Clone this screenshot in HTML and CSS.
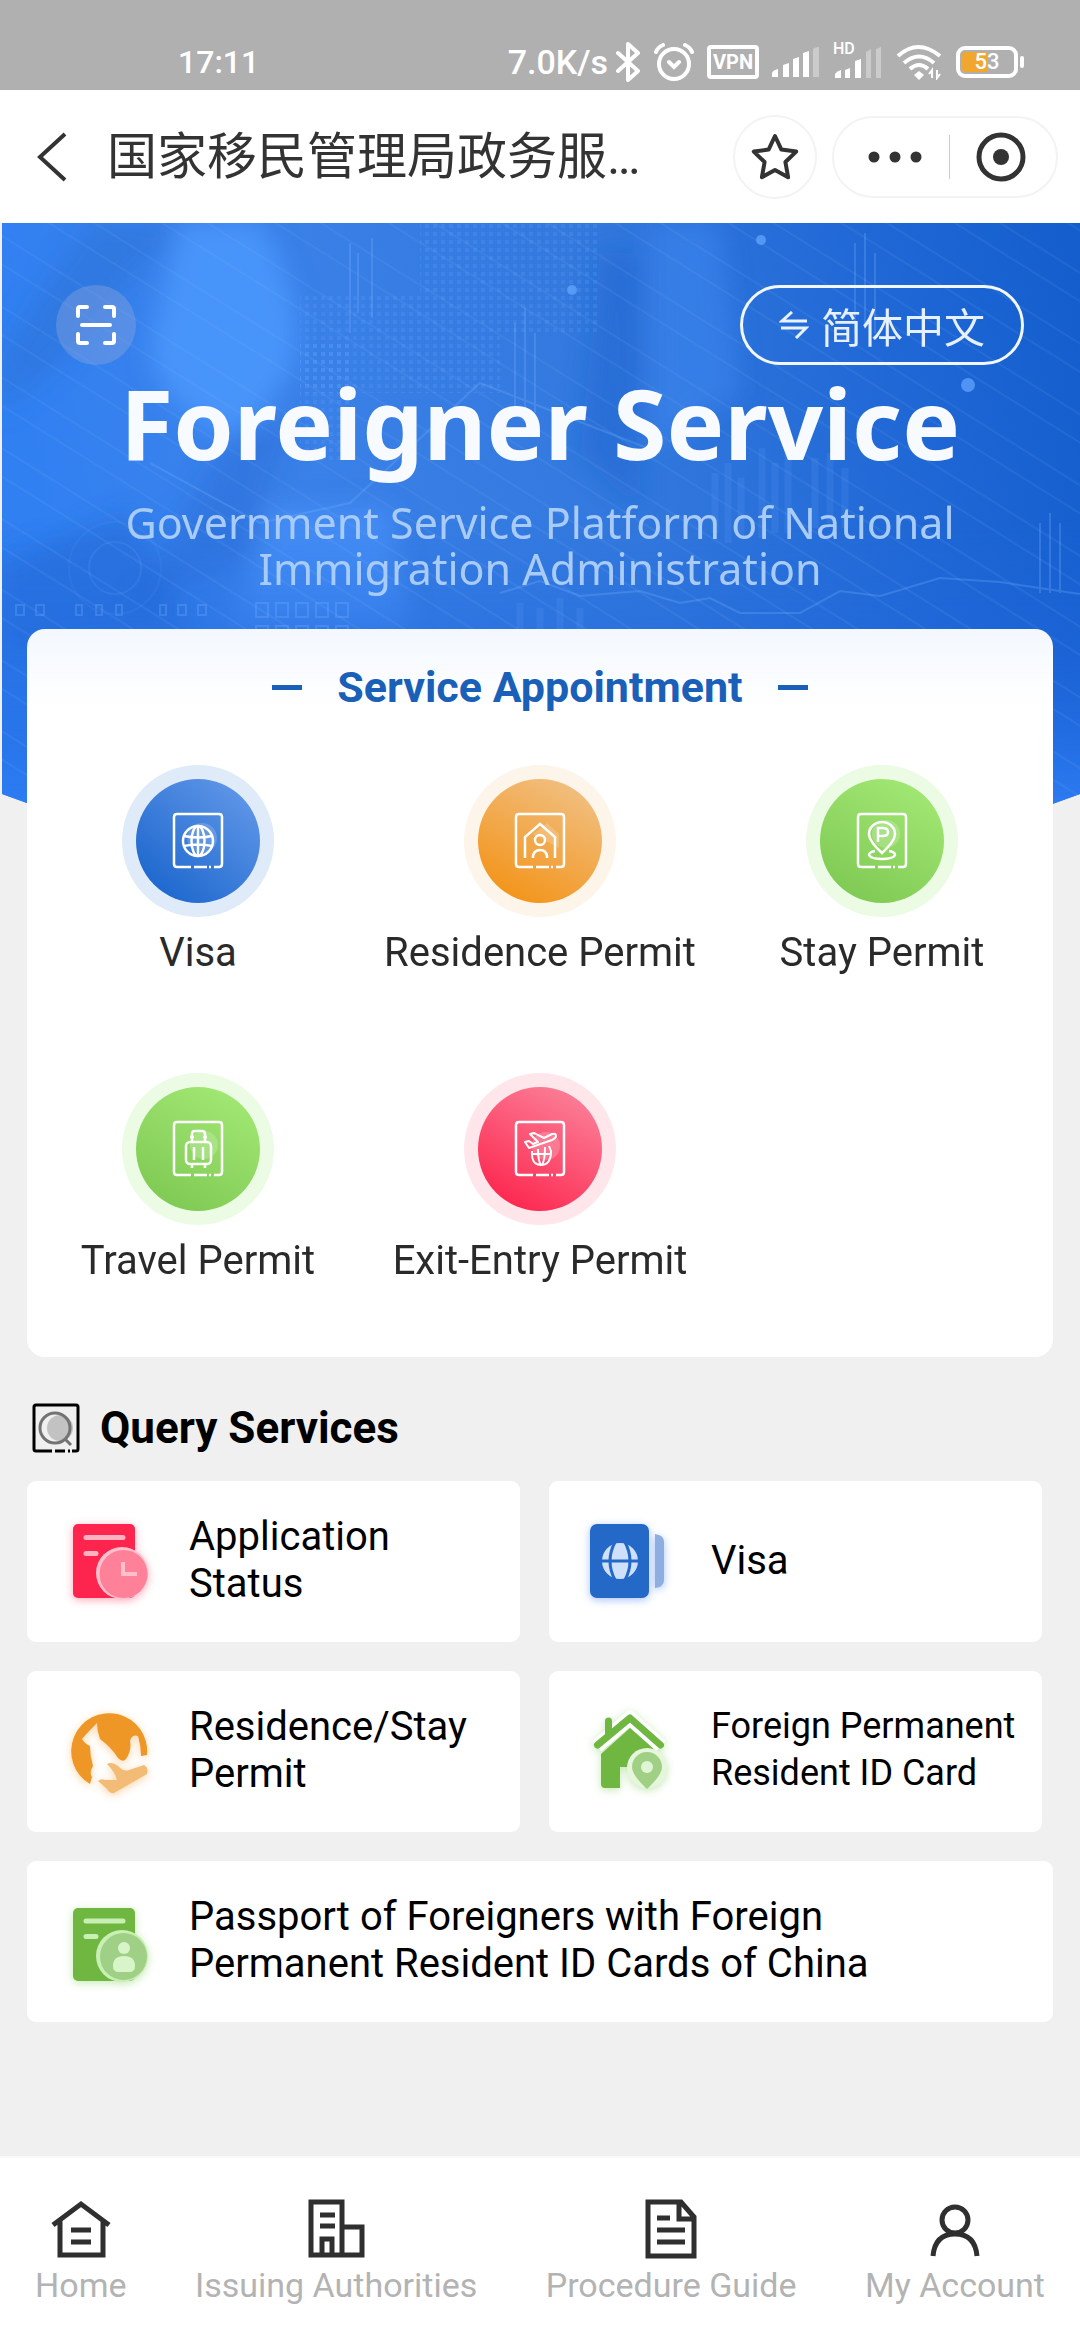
FILE: index.html
```html
<!DOCTYPE html>
<html lang="en">
<head>
<meta charset="utf-8">
<meta name="viewport" content="width=device-width, initial-scale=1">
<title>Foreigner Service</title>
<link rel="stylesheet" href="styles.css">
</head>
<body>
<svg class="defs" width="0" height="0" aria-hidden="true">
  <defs>
    <linearGradient id="blue" x1="0.2" y1="1" x2="0.9" y2="0.2"><stop offset="0" stop-color="#1b66cd"/><stop offset="1" stop-color="#5b93e6"/></linearGradient>
    <linearGradient id="orange" x1="0.3" y1="1" x2="0.8" y2="0.1"><stop offset="0" stop-color="#f3941a"/><stop offset="1" stop-color="#f1bd7c"/></linearGradient>
    <linearGradient id="green" x1="0.3" y1="1" x2="0.8" y2="0.1"><stop offset="0" stop-color="#7fca54"/><stop offset="1" stop-color="#a0e672"/></linearGradient>
    <linearGradient id="red" x1="0.3" y1="1" x2="0.8" y2="0.1"><stop offset="0" stop-color="#fd274f"/><stop offset="1" stop-color="#fb7b94"/></linearGradient>
    <path id="frame" d="M70 103H56q-3 0-3-3V53q0-3 3-3H98q3 0 3 3V100q0 3-3 3H93M73 103H86M88 103h2"/>
  </defs>
</svg>

<div class="status-bar">
  <span class="clock">17:11</span>
  <div class="status-icons">
    <span class="speed">7.0K/s</span>
    <svg width="26" height="40" viewBox="0 0 26 40" fill="none" stroke="#fff" stroke-width="4" stroke-linejoin="round" stroke-linecap="round"><path d="M3 11l20 18-10 9V2l10 9L3 29"/></svg>
    <svg width="40" height="38" viewBox="0 0 40 38" fill="none" stroke="#fff" stroke-width="4" stroke-linecap="round"><circle cx="20" cy="21" r="15"/><path d="M15 19l5 5 5-5M2 9q2-5 7-7M38 9q-2-5-7-7" stroke-width="4"/></svg>
    <span class="vpn">VPN</span>
    <svg width="48" height="32" viewBox="0 0 48 32" fill="#fff"><path d="M0 31v-4q1-3 6-4v8zM11 19l6-2v14h-6zM21 13l6-2v20h-6zM31 7l6-2v26h-6z"/><path d="M41 3q2-2 6-2v30h-6z" opacity=".35"/></svg>
    <span class="hd"><span class="hd-text">HD</span>
      <svg width="50" height="34" viewBox="0 0 50 34" fill="#fff"><path d="M2 33v-4q2-3 6-4v8zM12 25l5-2v10h-5zM22 16l6-2v19h-6z"/><path d="M33 7l5-3v29h-5zM43 4l5-2v31h-5z" opacity=".35"/></svg>
    </span>
    <svg width="47" height="36" viewBox="0 0 47 36" fill="none" stroke="#fff" stroke-width="4"><path d="M2 12q20-18 42 0M8 19q15-13 30 0M14 25q9-8 18 0"/><path d="M23 27l5 4-5 5-5-5z" fill="#fff" stroke="none"/><path d="M36 34v-8l-3 4M41 26v8l3-4" stroke-width="2"/></svg>
    <span class="battery"><span class="battery-body"><span class="battery-text">53</span></span><span class="battery-tip"></span></span>
  </div>
</div>

<header class="nav-bar">
  <button class="icon-button back" aria-label="Back"><svg width="32" height="52" viewBox="0 0 32 52" fill="none" stroke="#333" stroke-width="4"><path d="M29 3L4 26l25 23"/></svg></button>
  <div class="nav-title" lang="zh-CN">国家移民管理局政务服…</div>
  <button class="icon-button star" aria-label="Favourite"><svg width="50" height="50" viewBox="0 0 50 50" fill="none" stroke="#333" stroke-width="4" stroke-linejoin="round"><path d="M25 4l6.400 13.600 14.800 2-10.800 10.400 2.700 15.200L25 38l-13.100 7.200 2.700-15.200L3.800 19.600l14.800-2z"/></svg></button>
  <div class="capsule">
    <button class="icon-button" aria-label="More"><svg width="56" height="14" viewBox="0 0 56 14" fill="#333"><circle cx="7" cy="7" r="5.500"/><circle cx="28" cy="7" r="5.500"/><circle cx="49" cy="7" r="5.500"/></svg></button>
    <span class="divider"></span>
    <button class="icon-button" aria-label="Close"><svg width="50" height="50" viewBox="0 0 50 50"><circle cx="25" cy="25" r="22" fill="none" stroke="#333" stroke-width="5"/><circle cx="25" cy="25" r="8" fill="#333"/></svg></button>
  </div>
</header>

<main class="content">
  <svg class="backdrop" viewBox="0 0 1080 590" preserveAspectRatio="none" aria-hidden="true">
    <defs>
      <linearGradient id="sky" x1="0" y1="0.1" x2="1" y2="0"><stop offset="0" stop-color="#3180f2"/><stop offset=".2" stop-color="#3b82ea"/><stop offset=".55" stop-color="#3278dd"/><stop offset=".8" stop-color="#2068d6"/><stop offset="1" stop-color="#135dcd"/></linearGradient>
      <linearGradient id="deep" x1="0" y1="0" x2="0" y2="1"><stop offset=".5" stop-color="#1f67dc" stop-opacity="0"/><stop offset=".75" stop-color="#1f67dc" stop-opacity=".5"/><stop offset="1" stop-color="#2e7df4"/></linearGradient>
      <pattern id="dots" width="8" height="8" patternUnits="userSpaceOnUse"><rect x="1" y="1" width="4" height="4" fill="#68a7ff" opacity=".2"/></pattern>
      <pattern id="rays" width="60" height="60" patternUnits="userSpaceOnUse" patternTransform="rotate(32)"><path d="M0 10H60M0 34H60" stroke="#8fbdff" stroke-width="1.500" opacity=".13"/></pattern>
      <filter id="soft" x="-20%" y="-20%" width="140%" height="140%"><feGaussianBlur stdDeviation="12"/></filter>
      <clipPath id="arc"><path d="M2 0H1080V571Q540 771 2 571Z"/></clipPath>
    </defs>
    <g clip-path="url(#arc)">
      <rect width="1080" height="590" fill="url(#sky)"/>
      <g filter="url(#soft)">
        <path d="M180 0h80q50 80 30 150l-50 70q-90-40-90-100z" fill="#4a98fd" opacity=".85"/>
        <path d="M90 0h90L60 140 0 190v-60z" fill="#2a6fd6" opacity=".5"/>
        <path d="M300 200q-40 60-40 130l-130 60q60-120 110-190z" fill="#2569d2" opacity=".4"/>
        <path d="M270 285h120l20 120H230z" fill="#4a93fb" opacity=".7"/>
        <path d="M650 0h70l20 170-90 60z" fill="#3c86ee" opacity=".6"/>
        <path d="M600 30h40v260l-60-60z" fill="#1e62cd" opacity=".4"/>
        <path d="M0 340l130-50 60 120-190 20z" fill="#2365d2" opacity=".5"/>
      </g>
      <rect width="1080" height="590" fill="url(#deep)"/>
      <path d="M420 0h180v110H500v60H300V70h120z" fill="url(#dots)"/>
      <path d="M300 120h50v120h-50z" fill="url(#dots)"/>
      <rect width="1080" height="590" fill="url(#rays)"/>
      <g fill="none" stroke="#78b0ff" stroke-width="2" opacity=".28">
        <path d="M150 240l110 60 90-20 130-120 180 70M500 370l40-12 40 15 60-5 40 12 30-5 30 15h60l40-22 40 5 60-18 60 4 80 12"/>
        <path d="M350 20v90M358 30v60M372 15v80M515 100v90M525 85v110M535 110v80M855 20v90M865 10v90M875 30v80M1040 300v70M1050 290v80M1060 300v70"/>
        <path d="M256 380h12v14h-12zM276 380h12v14h-12zM296 380h12v14h-12zM316 380h12v14h-12zM336 380h12v14h-12zM256 403h12v14h-12zM276 403h12v14h-12zM296 403h12v14h-12zM316 403h12v14h-12zM336 403h12v14h-12z"/>
        <path d="M16 382h8v10h-8zM36 382h8v10h-8zM76 382h6v10h-6zM96 382h6v10h-6zM116 382h6v10h-6zM160 382h6v10h-6zM178 382h8v10h-8zM198 382h8v10h-8z"/>
        <circle cx="115" cy="345" r="26" opacity=".5"/><circle cx="115" cy="345" r="46" opacity=".3"/>
      </g>
      <path d="M715 250v60M728 240v80M741 255v60M762 225v90M775 240v70M788 220v90M815 235v70M830 230v70M845 245v60M520 380v30M540 385v30M560 375v40M580 385v30" stroke="#5d9cf8" stroke-width="7" opacity=".18"/>
      <g fill="#65a8ff" opacity=".7"><circle cx="761" cy="17" r="5"/><circle cx="572" cy="67" r="5"/><circle cx="968" cy="162" r="7"/></g>
    </g>
  </svg>

  <section class="hero">
    <div class="hero-actions">
      <button class="scan" aria-label="Scan"><svg width="44" height="44" viewBox="0 0 44 44" fill="none" stroke="#fff" stroke-width="4" stroke-linecap="round"><path d="M4 13V6q0-2 2-2h7M31 4h7q2 0 2 2v7M40 31v7q0 2-2 2h-7M13 40H6q-2 0-2-2v-7M8 22H36"/></svg></button>
      <button class="language" lang="zh-CN"><svg width="30" height="28" viewBox="0 0 30 28" fill="none" stroke="#e9f2ff" stroke-width="3"><path d="M28 10H3l10-9M2 17h25l-10 10"/></svg><span>简体中文</span></button>
    </div>
    <h1 class="hero-title">Foreigner Service</h1>
    <p class="hero-subtitle">Government Service Platform of National<br>Immigration Administration</p>
  </section>

  <section class="appointment">
    <h2 class="appointment-title">Service Appointment</h2>
    <div class="service-grid">
      <a class="service" href="#visa">
        <svg width="154" height="154" viewBox="0 0 154 154"><circle cx="77" cy="77" r="76" fill="#e0ebf9"/><circle cx="77" cy="77" r="62" fill="url(#blue)"/><circle cx="81" cy="74" r="15" fill="#fff" opacity=".18"/><g fill="none" stroke="#fff" stroke-width="2.500"><use href="#frame"/><circle cx="77" cy="77" r="15"/><ellipse cx="77" cy="77" rx="6.500" ry="15"/><path d="M77 62V92M63 72q14 3 28 0M63 82q14-3 28 0"/></g></svg>
        <span>Visa</span>
      </a>
      <a class="service" href="#residence">
        <svg width="154" height="154" viewBox="0 0 154 154"><circle cx="77" cy="77" r="76" fill="#fdf4ea"/><circle cx="77" cy="77" r="62" fill="url(#orange)"/><path d="M70 70l14-11 12 11v14z" fill="#fff" opacity=".18"/><g fill="none" stroke="#fff" stroke-width="2.500"><use href="#frame"/><path d="M62 94V73L77 60 92 73V94M70 94v-2q1-6 7-6t7 6v2"/><circle cx="77" cy="76" r="5"/></g></svg>
        <span>Residence Permit</span>
      </a>
      <a class="service" href="#stay">
        <svg width="154" height="154" viewBox="0 0 154 154"><circle cx="77" cy="77" r="76" fill="#ebfbe4"/><circle cx="77" cy="77" r="62" fill="url(#green)"/><circle cx="81" cy="70" r="14" fill="#fff" opacity=".2"/><g fill="none" stroke="#fff" stroke-width="2.500"><use href="#frame"/><path d="M77 89Q64 77 64 70a13 12 0 0 1 26 0Q90 77 77 89ZM73 78V64h5q5 0 5 4t-5 4h-5M70 87q-6 1-6 4 2 4 13 4t13-4q0-3-6-4"/></g></svg>
        <span>Stay Permit</span>
      </a>
      <a class="service" href="#travel">
        <svg width="154" height="154" viewBox="0 0 154 154"><circle cx="77" cy="77" r="76" fill="#ebfbe4"/><circle cx="77" cy="77" r="62" fill="url(#green)"/><circle cx="83" cy="73" r="14" fill="#fff" opacity=".2"/><g fill="none" stroke="#fff" stroke-width="2.500"><use href="#frame"/><path d="M71 70V62q0-3 3-3h7q3 0 3 3v8M69 65h4M82 65h4"/><rect x="65" y="70" width="25" height="22" rx="4"/><path d="M73 75v13M82 75v13M71 92v4M84 92v4"/></g></svg>
        <span>Travel Permit</span>
      </a>
      <a class="service" href="#exit-entry">
        <svg width="154" height="154" viewBox="0 0 154 154"><circle cx="77" cy="77" r="76" fill="#fee6ea"/><circle cx="77" cy="77" r="62" fill="url(#red)"/><circle cx="83" cy="74" r="14" fill="#fff" opacity=".2"/><g fill="none" stroke="#fff" stroke-width="2.500" stroke-linejoin="round"><use href="#frame"/><path d="M62 70l4-1 4 3 5-2-8-8 4-1 10 5 8-4q4-1 4 2 0 2-4 4L66 76zM69 79q-1 14 9 14t10-14l-2-5M69 82h19M75 77q0 12 3 16M82 75q0 13-3 18" stroke-width="2"/></g></svg>
        <span>Exit-Entry Permit</span>
      </a>
    </div>
  </section>

  <section class="queries">
    <h2 class="query-title"><svg width="48" height="50" viewBox="0 0 48 50" fill="none" stroke="#000" stroke-width="3"><path d="M20 48H4q-2 0-2-2V4q0-2 2-2H44q2 0 2 2V46q0 2-2 2H40M23 48H33M36 48h2"/><circle cx="28" cy="25" r="13" fill="#c2c2c2" stroke="none"/><g stroke="#737373" stroke-width="3"><circle cx="23" cy="25" r="15"/><path d="M33 36l6 6"/></g></svg>Query Services</h2>
    <div class="query-grid">
      <a class="query" href="#status">
        <svg class="glow-red" width="84" height="84" viewBox="0 0 84 84"><rect x="5" y="4" width="62" height="74" rx="5" fill="#fd244d"/><path d="M18 17.500H55M18 33.500H28" stroke="#ffb3c2" stroke-width="5" stroke-linecap="round"/><circle cx="54" cy="53" r="26" fill="#ffc0cc"/><circle cx="55.500" cy="54" r="24" fill="#ff8199"/><path d="M55 42V54H69" fill="none" stroke="#ffc0cc" stroke-width="4"/></svg>
        <span class="query-label">Application<br>Status</span>
      </a>
      <a class="query" href="#visa-query">
        <svg class="glow-blue" width="84" height="84" viewBox="0 0 84 84"><rect y="4" width="59" height="74" rx="7" fill="#2468c8"/><path d="M65 14q9 1 9 8V60q0 7-9 8z" fill="#8eaedf"/><circle cx="30" cy="41" r="18" fill="#cfe0fa"/><path d="M11 41H49M25 22q-10 19 0 38M35 22q10 19 0 38" fill="none" stroke="#2468c8" stroke-width="3"/></svg>
        <span class="query-label">Visa</span>
      </a>
      <a class="query" href="#residence-query">
        <svg class="glow-orange" width="84" height="84" viewBox="0 0 84 84"><path d="M22 74A38 38 0 1 1 79 45L73 46Q73 36 70 26q-6-2-8 5 2 9-4 18-3 4-8-1Q44 38 32 29q-3-8-3-16-9 9-15 16 3 5 8 7 0 10 3 20-4 6-1 11z" fill="#ee9727"/><path d="M30 71q3-3 7-1h12q-2-8-10-16 5-3 11 2 6 6 11 4L76 55q5 3 3 9L46 83q-4 1-7-4z" fill="#f3bc76"/></svg>
        <span class="query-label">Residence/Stay<br>Permit</span>
      </a>
      <a class="query" href="#id-card">
        <svg class="glow-green" width="84" height="84" viewBox="0 0 84 84"><path d="M11 44L40 18 65 39V57H30V78H15q-4 0-4-4z" fill="#70b742"/><path d="M7 36L40 8 71 36" fill="none" stroke="#fff" stroke-width="14"/><path d="M18.500 24V11" stroke="#70b742" stroke-width="7" stroke-linecap="round"/><path d="M7.500 35L40 8 70.500 35" fill="none" stroke="#70b742" stroke-width="7" stroke-linecap="round" stroke-linejoin="round"/><circle cx="57" cy="58" r="20" fill="#e6f6dc"/><path d="M57 79Q42 65 42 57a15 15 0 0 1 30 0Q72 65 57 79Z" fill="#9fd083"/><circle cx="57" cy="57" r="6" fill="#e0f5d5"/></svg>
        <span class="query-label compact">Foreign Permanent<br>Resident ID Card</span>
      </a>
    </div>
    <a class="query" href="#passport">
      <svg class="glow-green" width="84" height="84" viewBox="0 0 84 84"><rect x="5" y="8" width="62" height="73" rx="5" fill="#70b742"/><path d="M18 21H55M18 36.500H28" stroke="#c9f0b4" stroke-width="5" stroke-linecap="round"/><circle cx="54" cy="56" r="26" fill="#c9f0b4"/><circle cx="55.500" cy="56.500" r="23.500" fill="#a0cf86"/><circle cx="56" cy="48" r="6" fill="#d8f5c9"/><path d="M45 66q0-10 11-10t11 10q0 6-6 6H51q-6 0-6-6z" fill="#d8f5c9"/></svg>
      <span class="query-label">Passport of Foreigners with Foreign<br>Permanent Resident ID Cards of China</span>
    </a>
  </section>
</main>

<nav class="tab-bar">
  <a class="tab" href="#home"><svg width="64" height="64" viewBox="0 0 64 64" fill="none" stroke="#2f2f2f" stroke-width="5"><path d="M4 29L32 8l28 21M11 24V59H54V24M22 34H42M22 46H42"/></svg><span>Home</span></a>
  <a class="tab" href="#authorities"><svg width="64" height="64" viewBox="0 0 64 64" fill="none" stroke="#2f2f2f" stroke-width="5"><path d="M7 6H38V59H7zM38 31H58V59H38M16 19H31M16 30H31M18 59V43H28V59"/></svg><span>Issuing Authorities</span></a>
  <a class="tab" href="#guide"><svg width="64" height="64" viewBox="0 0 64 64" fill="none" stroke="#2f2f2f" stroke-width="5"><path d="M9 6H42L55 21V60H9zM40 6V23H55M18 22H31M18 34H46M18 46H46"/></svg><span>Procedure Guide</span></a>
  <a class="tab" href="#account"><svg width="64" height="64" viewBox="0 0 64 64" fill="none" stroke="#2f2f2f" stroke-width="5"><circle cx="32" cy="24" r="13"/><path d="M10 60Q12 38 32 38T54 60"/></svg><span>My Account</span></a>
</nav>
</body>
</html>
```
FILE: styles.css
```css
* {
  box-sizing: border-box;
}

body {
  margin: 0;
  min-height: 100vh;
  display: flex;
  flex-direction: column;
  background: #f0f0f0;
  color: #000;
  font-family: Roboto, "Noto Sans CJK SC", sans-serif;
}

svg {
  display: block;
  flex: none;
}

.defs {
  position: absolute;
}

a {
  color: inherit;
  text-decoration: none;
}

button {
  margin: 0;
  padding: 0;
  border: 0;
  background: none;
  color: inherit;
  font: inherit;
}

h1,
h2,
p {
  margin: 0;
}

/* Status bar */
.status-bar {
  height: 90px;
  padding: 42px 56px 8px 178px;
  display: flex;
  justify-content: space-between;
  align-items: center;
  background: #b0b0b0;
  color: #fff;
  font-size: 34px;
  font-weight: 500;
  line-height: 40px;
}

.clock {
  font-size: 32px;
}

.status-icons {
  display: flex;
  align-items: center;
  gap: 13px;
}

.speed {
  margin-right: -6px;
}

.vpn {
  width: 52px;
  height: 34px;
  border: 4px solid #fff;
  border-radius: 4px;
  font-size: 20px;
  font-weight: 700;
  line-height: 26px;
  text-align: center;
}

.hd {
  position: relative;
}

.hd-text {
  position: absolute;
  left: 0;
  top: -4px;
  font-size: 16px;
  line-height: 16px;
}

.battery {
  display: flex;
  align-items: center;
  gap: 2px;
}

.battery-body {
  width: 62px;
  height: 32px;
  border: 4px solid #fff;
  border-radius: 9px;
  padding: 2px;
  background: linear-gradient(90deg, #f0a62f 50%, transparent 50%) content-box;
}

.battery-text {
  display: block;
  font-size: 22px;
  line-height: 20px;
  text-align: center;
}

.battery-tip {
  width: 4px;
  height: 12px;
  border-radius: 2px;
  background: #fff;
}

/* Navigation bar */
.nav-bar {
  height: 133px;
  padding: 0 22px 0 36px;
  display: flex;
  align-items: center;
  background: #fff;
  color: #333;
}

.icon-button {
  display: flex;
  align-items: center;
  justify-content: center;
}

.nav-title {
  flex: 1;
  margin-left: 39px;
  font-size: 50px;
  line-height: 60px;
  white-space: nowrap;
}

.star {
  width: 84px;
  height: 84px;
  border: 2px solid #f3f3f3;
  border-radius: 50%;
}

.capsule {
  width: 226px;
  height: 82px;
  margin-left: 15px;
  display: flex;
  align-items: center;
  justify-content: space-between;
  padding: 0 30px 0 33px;
  border: 2px solid #f3f3f3;
  border-radius: 41px;
}

.divider {
  width: 1px;
  height: 44px;
  background: #ccc;
}

/* Hero */
.content {
  position: relative;
}

.backdrop {
  position: absolute;
  left: 0;
  top: 0;
  width: 100%;
  height: 590px;
}

.hero {
  position: relative;
  padding: 62px 56px 37px;
  color: #f7fbff;
  font-family: "Noto Sans", "Noto Sans CJK SC", sans-serif;
  text-align: center;
}

.hero-actions {
  display: flex;
  justify-content: space-between;
}

.scan {
  width: 80px;
  height: 80px;
  display: flex;
  align-items: center;
  justify-content: center;
  border-radius: 50%;
  background: rgba(140, 165, 220, 0.4);
}

.language {
  width: 284px;
  height: 80px;
  display: flex;
  align-items: center;
  justify-content: center;
  gap: 12px;
  border: 3px solid #f2f7ff;
  border-radius: 40px;
  color: #e6f0ff;
  font-family: "Noto Sans CJK SC", sans-serif;
  font-size: 41px;
  line-height: 48px;
}

.hero-title {
  font-size: 97px;
  font-weight: 700;
  line-height: 114px;
}

.hero-subtitle {
  margin-top: 21px;
  color: #a9cbf8;
  font-size: 43px;
  line-height: 46px;
}

/* Service appointment card */
.appointment {
  position: relative;
  margin: 0 27px;
  padding: 33px 0 72px;
  border-radius: 18px;
  background: linear-gradient(#f3f8fe, #fff 80px);
}

.appointment-title {
  display: flex;
  align-items: center;
  justify-content: center;
  gap: 35px;
  color: #1a5fb8;
  font-size: 43px;
  font-weight: 700;
  line-height: 50px;
}

.appointment-title::before,
.appointment-title::after {
  content: "";
  width: 30px;
  height: 5px;
  background: #1a5fb8;
}

.service-grid {
  margin-top: 52px;
  display: grid;
  grid-template-columns: repeat(3, 1fr);
  row-gap: 95px;
}

.service {
  display: flex;
  flex-direction: column;
  align-items: center;
  gap: 11px;
  color: #2a2a2a;
  font-size: 40px;
  line-height: 48px;
  white-space: nowrap;
}

/* Query services */
.queries {
  padding: 46px 27px 40px;
}

.query-title {
  display: flex;
  align-items: center;
  gap: 20px;
  padding-left: 5px;
  font-size: 44px;
  font-weight: 700;
  line-height: 50px;
}

.query-grid {
  margin: 28px 11px 29px 0;
  display: grid;
  grid-template-columns: repeat(2, minmax(0, 1fr));
  gap: 29px;
}

.query {
  min-height: 161px;
  padding-left: 41px;
  display: flex;
  align-items: center;
  gap: 37px;
  border-radius: 9px;
  background: #fff;
  white-space: nowrap;
}

.query-label {
  padding-bottom: 3px;
  font-size: 40px;
  line-height: 47px;
}

.compact {
  font-size: 36px;
}

.glow-red {
  filter: drop-shadow(0 2px 4px rgba(253, 36, 77, 0.4));
}

.glow-blue {
  filter: drop-shadow(0 2px 4px rgba(36, 104, 240, 0.4));
}

.glow-orange {
  filter: drop-shadow(0 2px 4px rgba(238, 151, 39, 0.4));
}

.glow-green {
  filter: drop-shadow(0 2px 4px rgba(112, 200, 66, 0.4));
}

/* Tab bar */
.tab-bar {
  margin-top: auto;
  height: 184px;
  padding: 38px 35px 0;
  display: flex;
  justify-content: space-between;
  border-top: 2px solid #f8f8f8;
  background: #fff;
}

.tab {
  display: flex;
  flex-direction: column;
  align-items: center;
  gap: 5px;
  color: #b3b3b3;
  font-size: 34px;
  line-height: 40px;
  white-space: nowrap;
}
```
